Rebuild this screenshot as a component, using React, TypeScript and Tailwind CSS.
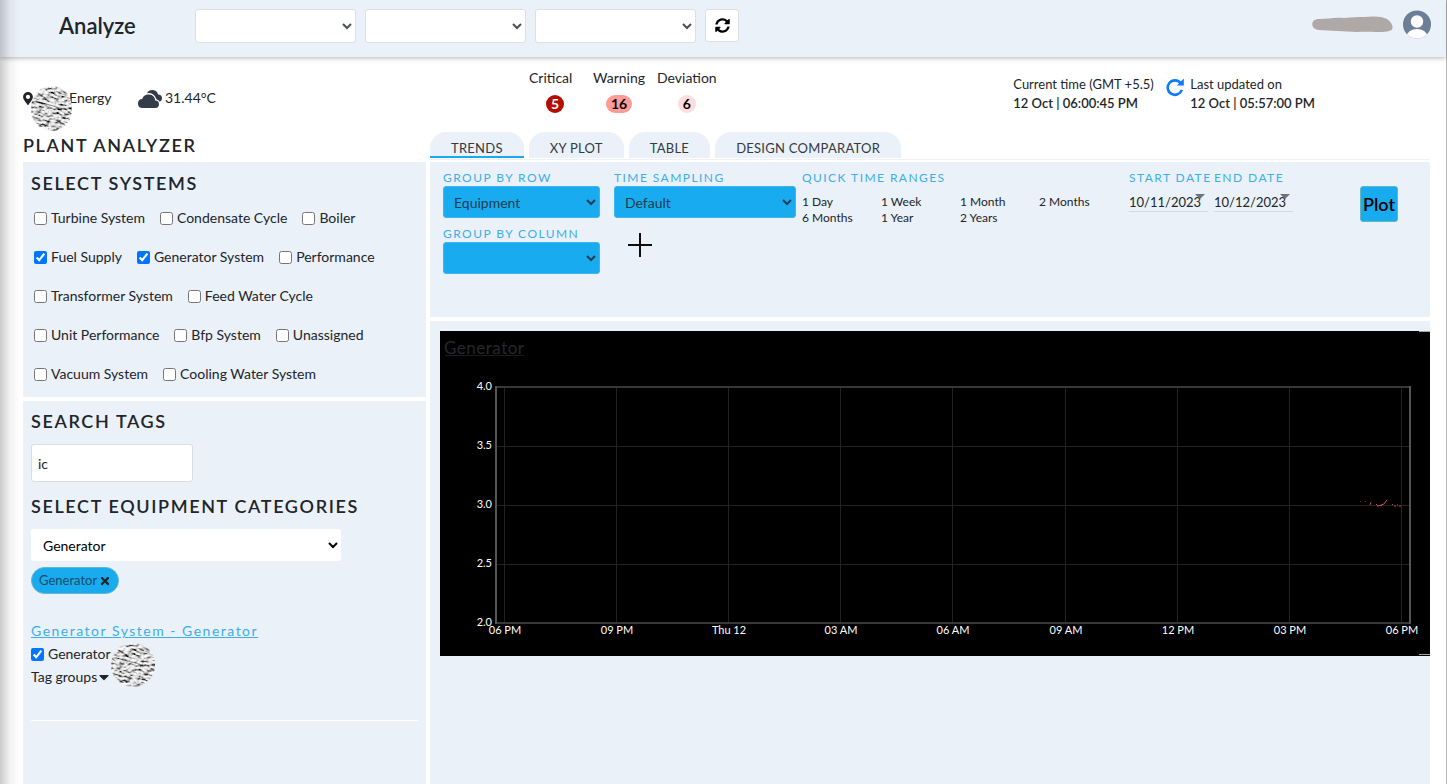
import { clsx } from "clsx";
import { useState } from "react";
import { BsCloudsFill } from "react-icons/bs";
import { FaCaretDown, FaMapMarkerAlt, FaSyncAlt, FaTimes } from "react-icons/fa";

interface System {
  name: string;
  checked: boolean;
}

const SYSTEMS: System[] = [
  { name: "Turbine System", checked: false },
  { name: "Condensate Cycle", checked: false },
  { name: "Boiler", checked: false },
  { name: "Fuel Supply", checked: true },
  { name: "Generator System", checked: true },
  { name: "Performance", checked: false },
  { name: "Transformer System", checked: false },
  { name: "Feed Water Cycle", checked: false },
  { name: "Unit Performance", checked: false },
  { name: "Bfp System", checked: false },
  { name: "Unassigned", checked: false },
  { name: "Vacuum System", checked: false },
  { name: "Cooling Water System", checked: false },
];

const ALERTS = [
  { label: "Critical", count: 5, color: "bg-[#b30c00] text-white" },
  { label: "Warning", count: 16, color: "bg-[#ff9c97] text-black" },
  { label: "Deviation", count: 6, color: "bg-[#fddddd] text-black" },
];

const TABS = ["TRENDS", "XY PLOT", "TABLE", "DESIGN COMPARATOR"];

const RANGES = [
  "1 Day",
  "1 Week",
  "1 Month",
  "2 Months",
  "6 Months",
  "1 Year",
  "2 Years",
];

const HOURS = [
  "06 PM",
  "09 PM",
  "Thu 12",
  "03 AM",
  "06 AM",
  "09 AM",
  "12 PM",
  "03 PM",
  "06 PM",
];

const LEVELS = ["4.0", "3.5", "3.0", "2.5", "2.0"];

const heading = "text-lg leading-6 font-semibold tracking-[0.09em] text-[#212529]";
const fieldLabel = "block text-xs leading-4 tracking-[0.12em] text-[#3daee9]";
const blueSelect =
  "block h-8 rounded-[3px] border border-[#3fb4ee] bg-[#19abf0] pl-1.5 text-sm text-[#1d3c50]";

const Patch = ({ id, className }: { id: string; className: string }) => (
  <svg viewBox="0 0 44 44" preserveAspectRatio="none" className={className} aria-hidden="true">
    <filter id={id} x="0" y="0" width="100%" height="100%">
      <feTurbulence type="fractalNoise" baseFrequency="0.18 0.5" numOctaves="5" seed="4" />
      <feDiffuseLighting lightingColor="#ececec" surfaceScale="6" diffuseConstant="1.2">
        <feDistantLight azimuth="240" elevation="50" />
      </feDiffuseLighting>
      <feComposite in2="SourceGraphic" operator="in" />
    </filter>
    <g transform="rotate(15 22 22)">
      <circle cx="22" cy="22" r="22" fill="#b5b5b5" filter={`url(#${id})`} />
    </g>
  </svg>
);

const TrendChart = () => {
  const x = (i: number) => 64 + Math.round(i * 112.1);
  const y = (i: number) => 56 + i * 59;
  return (
    <svg viewBox="0 0 990 325" className="block w-full bg-black" role="img" aria-label="Generator trend">
      <rect x="5" y="24" width="79" height="1" fill="#1a1b1d" />
      <text x="4" y="23" fontSize="17" fill="#26282b" letterSpacing="0.5">
        Generator
      </text>
      {HOURS.map((_, i) => (
        <rect key={i} x={x(i)} y="56" width="1" height="237" fill="#222" />
      ))}
      {LEVELS.map((level, i) => (
        <rect key={level} x="56" y={y(i)} width="915" height="1" fill="#222" />
      ))}
      <path d="M56 56H971M56 292H971" stroke="#383838" strokeWidth="2" />
      <path d="M56 55V293M970 55V293" stroke="#555" strokeWidth="2" />
      {LEVELS.map((level, i) => (
        <text key={level} x="52" y={y(i) + 3} textAnchor="end" fontSize="11" fill="#fff">
          {level}
        </text>
      ))}
      {HOURS.map((hour, i) => (
        <text key={i} x={x(i) + 1} y="303" textAnchor="middle" fontSize="11" fill="#fff">
          {hour}
        </text>
      ))}
      <g fill="none" stroke="#c04a52" strokeWidth="1">
        <path d="M920 170.500h1M925 170.500h1" opacity=".6" />
        <path d="M930 174l1-3M936 173l2 2 3-1 3-1 2-3 1-1" />
        <path d="M937 175h1M940 174.500h2M952 173.500h1M954 175h2M957 174h1M959 175h2" />
      </g>
      <path d="M979 .500h11M979 323.500h11" stroke="#a5a5a5" />
    </svg>
  );
};

const Header = () => (
  <header className="relative z-10 flex h-[57px] shrink-0 items-start bg-[#eaf1f9] pt-[9px] pr-[15px] shadow-[0_1px_5px_rgba(0,0,0,0.3)]">
    <h1 className="w-[195px] shrink-0 pl-[59px] text-[22px] leading-[34px] font-semibold text-[#212529]">
      Analyze
    </h1>
    <div className="flex gap-[9px]">
      {["Plant", "Unit", "Section"].map((name) => (
        <select
          key={name}
          aria-label={name}
          className="h-[34px] w-[161px] rounded-[3px] border border-[#dcdfe3] bg-white text-[#495057]"
        />
      ))}
      <button
        aria-label="Reload"
        className="flex h-[33px] w-[34px] items-center justify-center rounded-[3px] border border-[#dcdfe3] bg-white text-black"
      >
        <FaSyncAlt size={15} />
      </button>
    </div>
    <div className="ml-auto flex items-center gap-[9px]">
      <svg width="82" height="18" viewBox="0 0 82 18" aria-hidden="true">
        <path
          d="M7 4C16 4 22 2 32 3c8-1 14-1 20-1 9-1 18-1 23 2 6 4 8 11 2 12-6 2-22 0-32 1-13-1-27-1-38-2C-2 14-2 4 7 4Z"
          fill="#aea8a7"
        />
      </svg>
      <svg width="28" height="30" viewBox="0 0 28 30" role="img" aria-label="Account">
        <clipPath id="avatar">
          <circle cx="14" cy="15.500" r="14" />
        </clipPath>
        <g clipPath="url(#avatar)">
          <rect width="28" height="30" fill="#6c7f96" />
          <circle cx="14" cy="12.500" r="6.200" fill="#fff" />
          <ellipse cx="14" cy="28" rx="10.500" ry="8" fill="#fff" />
        </g>
      </svg>
    </div>
  </header>
);

const StatusBar = () => (
  <section className="flex h-[73px] shrink-0 text-sm leading-5 text-[#212529]">
    <div className="flex w-[506px] items-start pt-[31px]">
      <FaMapMarkerAlt className="mt-1 h-[13px] w-2.5" />
      <div className="relative w-[105px] pl-9">
        <span>Energy</span>
        <Patch id="site-patch" className="absolute -top-[2px] -left-0.5 h-[45px] w-[41px]" />
      </div>
      <BsCloudsFill size={24} color="#343c49" className="-mt-px mr-[3px]" />
      <span>31.44°C</span>
    </div>
    <ul className="flex gap-3 pt-[11px]">
      {ALERTS.map((alert) => (
        <li key={alert.label} className="flex min-w-[52px] flex-col items-center gap-[7px]">
          <span className="self-start">{alert.label}</span>
          <span className={clsx("rounded-full px-[5px] text-sm leading-[18px] font-bold", alert.color)}>
            {alert.count}
          </span>
        </li>
      ))}
    </ul>
    <div className="ml-auto flex pt-[18px] pr-[115px] text-[13px] leading-[19px]">
      <p className="w-[153px]">
        Current time (GMT +5.5)
        <br />
        <b className="font-semibold">12 Oct | 06:00:45 PM</b>
      </p>
      <svg width="20" height="20" viewBox="0 0 20 20" className="mt-0.5 mr-1" aria-hidden="true">
        <path d="M15.800 12.800A7.200 7.200 0 1 1 14.500 6" fill="none" stroke="#0d7bfd" strokeWidth="2.600" />
        <path d="M17.800 1.500v7h-7Z" fill="#0d7bfd" />
      </svg>
      <p>
        Last updated on
        <br />
        <b className="font-semibold">12 Oct | 05:57:00 PM</b>
      </p>
    </div>
  </section>
);

const Sidebar = () => {
  const [systems, setSystems] = useState<System[]>(SYSTEMS);
  const [search, setSearch] = useState("ic");

  const toggle = (name: string) => {
    setSystems(systems.map((s) => (s.name === name ? { ...s, checked: !s.checked } : s)));
  };

  return (
    <aside className="flex w-[403px] shrink-0 flex-col text-sm text-[#212529]">
      <h2 className={clsx(heading, "h-8 pt-[3px]")}>PLANT ANALYZER</h2>
      <section className="mb-1 bg-[#eaf1f9] px-2 pt-[9px] pb-[13px]">
        <h3 className={heading}>SELECT SYSTEMS</h3>
        <div className="flex flex-wrap gap-x-[15px] gap-y-[19px] pt-[13px] pl-[3px]">
          {systems.map((system) => (
            <label key={system.name} className="flex items-center gap-1 leading-5">
              <input
                type="checkbox"
                checked={system.checked}
                onChange={() => toggle(system.name)}
                className="size-[13px] accent-[#0075ff]"
              />
              {system.name}
            </label>
          ))}
        </div>
      </section>
      <section className="flex-1 bg-[#eaf1f9] px-2 pt-2">
        <h3 className={heading}>
          <label htmlFor="tags">SEARCH TAGS</label>
        </h3>
        <input
          id="tags"
          value={search}
          onChange={(e) => setSearch(e.target.value)}
          className="mt-[11px] block h-[38px] w-[162px] rounded-[3px] border border-[#d9dde2] bg-white px-1.5 outline-none"
        />
        <h3 className={clsx(heading, "mt-3")}>
          <label htmlFor="category">SELECT EQUIPMENT CATEGORIES</label>
        </h3>
        <select id="category" className="mt-[11px] block h-8 w-[310px] rounded-[3px] bg-white pl-2 text-black">
          <option>Generator</option>
        </select>
        <button className="mt-1.5 flex h-[27px] items-center gap-0.5 rounded-full border border-[#5fb8c8] bg-[#19abf0] px-[7px] text-[13px]">
          <span className="text-[#1d4c66]">Generator</span>
          <FaTimes size={12} />
        </button>
        <a href="#generator" className="mt-[27px] block leading-5 tracking-[1.5px] text-[#3daee9] underline">
          Generator System - Generator
        </a>
        <div className="relative">
          <label className="mt-[3px] flex items-center gap-1 leading-5">
            <input type="checkbox" defaultChecked className="size-[13px] accent-[#0075ff]" />
            Generator
          </label>
          <button className="mt-[3px] flex items-center gap-0.5 leading-5">
            Tag groups
            <FaCaretDown className="h-4 w-2.5" />
          </button>
          <Patch id="tag-patch" className="absolute -top-px left-20 size-[44px]" />
        </div>
        <hr className="mt-[33px] border-white" />
      </section>
    </aside>
  );
};

const DateField = ({ id, label, value }: { id: string; label: string; value: string }) => (
  <div className="min-w-0">
    <label htmlFor={id} className={clsx(fieldLabel, "whitespace-nowrap")}>
      {label}
    </label>
    <div className="relative mt-2 w-[79px] border-b border-[#d3d9e6]">
      <input
        id={id}
        defaultValue={value}
        className="block h-[17px] w-full bg-transparent pt-px text-[13px] outline-none"
      />
      <span className="absolute top-0 right-[3px] border-x-[5px] border-t-[5px] border-x-transparent border-t-[#6d737b]" />
    </div>
  </div>
);

const Controls = () => (
  <section className="relative grid h-[155px] grid-cols-[171fr_188fr_327fr_85fr_146fr_70fr] bg-[#eaf1f9] pt-2 pl-[13px] text-[13px] text-[#212529]">
    <div>
      <label htmlFor="row" className={fieldLabel}>
        GROUP BY ROW
      </label>
      <select id="row" className={clsx(blueSelect, "w-[157px]")}>
        <option>Equipment</option>
      </select>
      <label htmlFor="column" className={clsx(fieldLabel, "mt-2")}>
        GROUP BY COLUMN
      </label>
      <select id="column" className={clsx(blueSelect, "w-[157px]")} />
    </div>
    <div>
      <label htmlFor="sampling" className={fieldLabel}>
        TIME SAMPLING
      </label>
      <select id="sampling" className={clsx(blueSelect, "w-[182px]")}>
        <option>Default</option>
      </select>
    </div>
    <div>
      <h4 className={fieldLabel}>QUICK TIME RANGES</h4>
      <div className="mt-2 grid w-[316px] grid-cols-4">
        {RANGES.map((range) => (
          <button key={range} className="text-left text-xs leading-4">
            {range}
          </button>
        ))}
      </div>
    </div>
    <DateField id="start" label="START DATE" value="10/11/2023" />
    <DateField id="end" label="END DATE" value="10/12/2023" />
    <button className="mt-4 h-9 w-[38px] rounded-[3px] border border-[#5fb8c8] bg-[#19abf0] text-lg font-semibold text-black">
      Plot
    </button>
    <svg width="24" height="24" viewBox="0 0 24 24" className="absolute top-[71px] left-[198px]" aria-hidden="true">
      <path d="M12 0v24M0 12h24" stroke="#140c08" strokeWidth="2" />
    </svg>
  </section>
);

export default function App() {
  const [tab, setTab] = useState("TRENDS");

  return (
    <div className="relative flex min-h-screen flex-col border-r border-[#b5b5b5] bg-white font-['Lato',sans-serif]">
      <Header />
      <main className="flex flex-1 flex-col pr-4 pl-[23px]">
        <StatusBar />
        <div className="flex flex-1 gap-1">
          <Sidebar />
          <div className="flex min-w-0 flex-1 flex-col">
            <nav className="mb-0.5 flex h-[30px] gap-[5px] border-b border-[#eef0f5] pt-0.5 pb-px">
              {TABS.map((name) => (
                <button
                  key={name}
                  onClick={() => setTab(name)}
                  className={clsx(
                    "rounded-t-2xl border-b-2 bg-[#eaf1f9] px-[21px] pt-1.5 text-[13px] leading-5 tracking-[0.02em] text-[#343a40]",
                    tab === name ? "border-[#19abf0]" : "border-transparent"
                  )}
                >
                  {name}
                </button>
              ))}
            </nav>
            <Controls />
            <section className="mt-1 flex-1 bg-[#eaf1f9] pt-2.5 pl-2.5">
              <TrendChart />
            </section>
          </div>
        </div>
      </main>
      <div className="pointer-events-none absolute inset-y-0 left-0 z-20 w-5 bg-linear-to-r from-black/20 via-black/5 to-transparent" />
    </div>
  );
}
